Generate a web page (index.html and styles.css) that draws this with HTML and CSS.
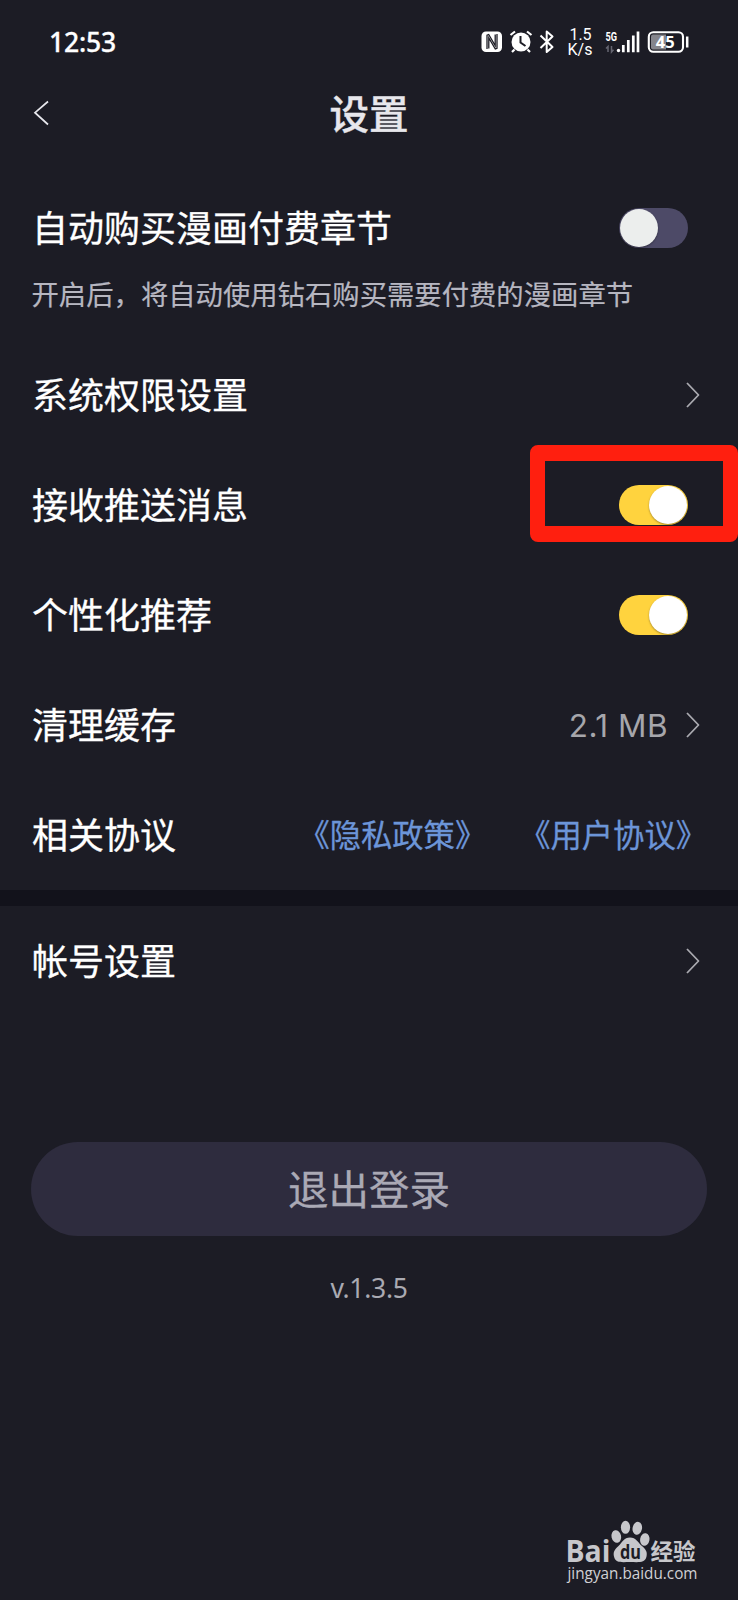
FILE: index.html
```html
<!DOCTYPE html>
<html lang="zh-CN">
<head>
<meta charset="utf-8">
<title>设置</title>
<link rel="stylesheet" href="styles.css">
</head>
<body>
<div class="status-bar">
  <span class="time">12:53</span>
  <svg class="status-icons" width="230" height="50" viewBox="0 0 230 50">
    <!-- NFC -->
    <rect x="11.5" y="11.5" width="20.5" height="20.5" rx="4.500" fill="#fff"/>
    <path d="M17 29V15.200l1.700-.7 6.500 11V14.500M27 14v14.300l-1.700.7-6.500-11v10.500" fill="none" stroke="#1c1c25" stroke-width="1.300"/>
    <!-- Alarm -->
    <circle cx="51" cy="22" r="9.500" fill="#fff"/>
    <path d="M40.500 15l4.500-3.500M61.500 15L57 11.500M44.500 29.500l-2.500 2.500M57.500 29.500l2.500 2.500" stroke="#fff" stroke-width="2.200"/>
    <path d="M50.500 16v6.500l5 3.500" fill="none" stroke="#1c1c25" stroke-width="2"/>
    <!-- Bluetooth -->
    <path d="M70.500 15.500L82.500 27 76.700 32V11.500l5.800 5L70.500 28" fill="none" stroke="#fff" stroke-width="2" stroke-linejoin="round"/>
    <!-- Network speed -->
    <text class="speed" x="110.500" y="20">1.5</text>
    <text class="speed" x="110" y="35">K/s</text>
    <!-- Signal -->
    <text class="net" x="135.500" y="20.500" textLength="11.500" lengthAdjust="spacingAndGlyphs">5G</text>
    <path d="M138 32v-5.500l-2 2M141.500 26v6l2-2.200" fill="none" stroke="#666671" stroke-width="1.500"/>
    <circle cx="148.500" cy="30.500" r="1.700" fill="#fff"/>
    <path d="M153.300 25v7.200M158.300 20v12.200M163.300 15.500v16.700M168 11.500v20.700" stroke="#fff" stroke-width="2.700"/>
    <!-- Battery -->
    <rect x="178.800" y="12.200" width="34.200" height="19.600" rx="4.500" fill="none" stroke="#fff" stroke-width="2.100"/>
    <path d="M196 14.500h-13a2 2 0 0 0-2 2v11a2 2 0 0 0 2 2h13z" fill="#85858c"/>
    <path d="M217.200 16.500v11" stroke="#fff" stroke-width="2.500"/>
    <text class="battery" x="195.300" y="28">45</text>
  </svg>
</div>
<header class="header">
  <svg class="back" width="16" height="26" viewBox="0 0 16 26"><path d="M15 1.500L2 12.700l13 11.800" fill="none" stroke="#e8e8ee" stroke-width="1.700"/></svg>
  <h1 class="title">设置</h1>
</header>
<main class="settings">
  <div class="row row-purchase"><span class="label">自动购买漫画付费章节</span><span class="toggle"></span></div>
  <p class="hint">开启后，将自动使用钻石购买需要付费的漫画章节</p>
  <div class="row"><span class="label">系统权限设置</span><svg class="chevron" width="14" height="26" viewBox="0 0 14 26"><path d="M1 1l11.500 12L1 25" fill="none" stroke="#aaaab0" stroke-width="1.800" stroke-linejoin="round"/></svg></div>
  <div class="row"><span class="label">接收推送消息</span><span class="toggle on"></span><span class="highlight"></span></div>
  <div class="row"><span class="label">个性化推荐</span><span class="toggle on"></span></div>
  <div class="row"><span class="label">清理缓存</span><span class="detail"><span class="size">2.1 MB</span><svg class="chevron" width="14" height="26" viewBox="0 0 14 26"><path d="M1 1l11.500 12L1 25" fill="none" stroke="#aaaab0" stroke-width="1.800" stroke-linejoin="round"/></svg></span></div>
  <div class="row"><span class="label">相关协议</span><span class="links"><a>《隐私政策》</a><a>《用户协议》</a></span></div>
  <div class="divider"></div>
  <div class="row"><span class="label">帐号设置</span><svg class="chevron" width="14" height="26" viewBox="0 0 14 26"><path d="M1 1l11.500 12L1 25" fill="none" stroke="#aaaab0" stroke-width="1.800" stroke-linejoin="round"/></svg></div>
</main>
<button class="logout">退出登录</button>
<p class="version">v.1.3.5</p>
<svg class="watermark" width="140" height="75" viewBox="560 1515 140 75">
  <text class="brand" x="565.500" y="1561.500" textLength="45" lengthAdjust="spacingAndGlyphs">Bai</text>
  <g fill="#c7c7cb">
    <ellipse cx="616.300" cy="1536.500" rx="4.800" ry="6.300" transform="rotate(-12 616.300 1536.500)"/>
    <ellipse cx="625.500" cy="1527.300" rx="4.600" ry="6.500"/>
    <ellipse cx="637.300" cy="1528.300" rx="4.700" ry="6.500" transform="rotate(12 637.300 1528.300)"/>
    <ellipse cx="644.800" cy="1539.500" rx="4.700" ry="6.300" transform="rotate(10 644.800 1539.500)"/>
    <path d="M630 1537.500c-6 0-8 5-11.500 8.500-4 3.500-5.500 6-4.500 10.500 1.500 7 8.500 5.500 16 5.500s15 1.500 16.500-5.500c1-4.500-.5-7-4.500-10.500-4-3.500-6-8.500-12-8.500z"/>
  </g>
  <text class="du" x="630.500" y="1558.500" textLength="21" lengthAdjust="spacingAndGlyphs">du</text>
  <text class="brand-cn" x="650.500" y="1559.700">经验</text>
  <text class="url" x="567.500" y="1579" textLength="130" lengthAdjust="spacingAndGlyphs">jingyan.baidu.com</text>
</svg>
</body>
</html>
```
FILE: styles.css
```css
* { box-sizing: border-box; }

body {
  position: relative;
  margin: 0;
  width: 738px;
  height: 1600px;
  overflow: hidden;
  background: #1c1c25;
  color: #fff;
  font-family: "Noto Sans", "Noto Sans CJK SC", sans-serif;
}

.status-bar {
  display: flex;
  justify-content: space-between;
  height: 70px;
  padding: 20px 38px 0 49px;
}

.time {
  font-size: 26.5px;
  font-weight: 500;
  line-height: 45px;
  letter-spacing: -0.2px;
  -webkit-text-stroke: 0.3px;
}

.speed {
  fill: #fff;
  font: 400 16px Roboto, sans-serif;
  text-anchor: middle;
}

.net {
  fill: #fff;
  font: 700 12.5px Roboto, sans-serif;
}

.battery {
  fill: #fff;
  font: 700 16.5px "Open Sans", sans-serif;
  text-anchor: middle;
}

.header {
  display: grid;
  grid-template-columns: 60px 1fr 60px;
  align-items: center;
  height: 86px;
}

.back { margin-left: 33px; }

.title {
  margin: 0;
  padding-bottom: 3px;
  color: #e7e7ec;
  font: 500 39.5px/56px "Noto Sans CJK SC", sans-serif;
  text-align: center;
  -webkit-text-stroke: 0.4px;
}

.row {
  position: relative;
  display: flex;
  align-items: center;
  justify-content: space-between;
  height: 110px;
  padding: 0 38.5px 0 32px;
  font: 400 36px/54px "Noto Sans CJK SC", sans-serif;
}

.label {
  padding-bottom: 4px;
  -webkit-text-stroke: 0.3px;
}

.row:has(.toggle) { padding-right: 50.5px; }
.row:has(.links) { padding-right: 31px; }

.row-purchase {
  height: 80px;
  margin-top: 32px;
}

.hint {
  height: 72px;
  margin: 0;
  padding-left: 31.5px;
  color: #b6b6c0;
  font: 400 27.35px/50px "Noto Sans CJK SC", sans-serif;
  -webkit-text-stroke: 0.2px;
}

.toggle {
  display: flex;
  align-items: center;
  width: 68.5px;
  height: 40.5px;
  padding: 0 1px;
  border-radius: 21px;
  background: #4d4a67;
}

.toggle::before {
  width: 38px;
  height: 38px;
  border-radius: 50%;
  background: #eceeed;
  box-shadow: 0 1px 2px rgba(0, 0, 0, 0.35);
  content: "";
}

.toggle.on {
  justify-content: flex-end;
  background: #ffd33e;
}

.toggle.on::before { background: #fff; }

.highlight {
  position: absolute;
  top: -5px;
  right: 0;
  width: 208px;
  height: 97px;
  border: 16px solid #ff1f0f;
  border-right-width: 15px;
  border-left-width: 15px;
  border-radius: 8px;
}

.detail {
  display: flex;
  align-items: center;
  gap: 17.5px;
}

.size {
  padding-top: 2px;
  color: #a6a6ab;
  font-family: Inter, "Noto Sans", sans-serif;
  font-size: 31.5px;
  letter-spacing: 0.5px;
}

.links {
  display: flex;
  gap: 33px;
  padding-bottom: 2px;
  color: #6c95d8;
  font-size: 31.3px;
  -webkit-text-stroke: 0.3px;
}

.divider {
  height: 16px;
  background: #12121b;
}

.logout {
  display: block;
  width: 676px;
  height: 94px;
  margin: 126px auto 0 31px;
  padding: 0 0 2px;
  border: 0;
  border-radius: 47px;
  background: #2e2c3e;
  color: #aaa9b5;
  font: 400 40.5px/92px "Noto Sans CJK SC", sans-serif;
  -webkit-text-stroke: 0.3px;
}

.version {
  margin: 32px 0 0;
  color: #aaaab2;
  font-size: 26.5px;
  line-height: 40px;
  letter-spacing: -0.3px;
  text-align: center;
}

.watermark {
  position: absolute;
  left: 560px;
  top: 1515px;
}

.brand {
  fill: #c7c7cb;
  font: 700 30px "Open Sans", sans-serif;
}

.du {
  fill: #1c1c25;
  font: 700 19px "Open Sans", sans-serif;
  text-anchor: middle;
}

.brand-cn {
  fill: #c7c7cb;
  font: 700 22.5px "Noto Sans CJK SC", sans-serif;
}

.url {
  fill: #d0d0d4;
  font: 400 17px "Open Sans", sans-serif;
}
```
